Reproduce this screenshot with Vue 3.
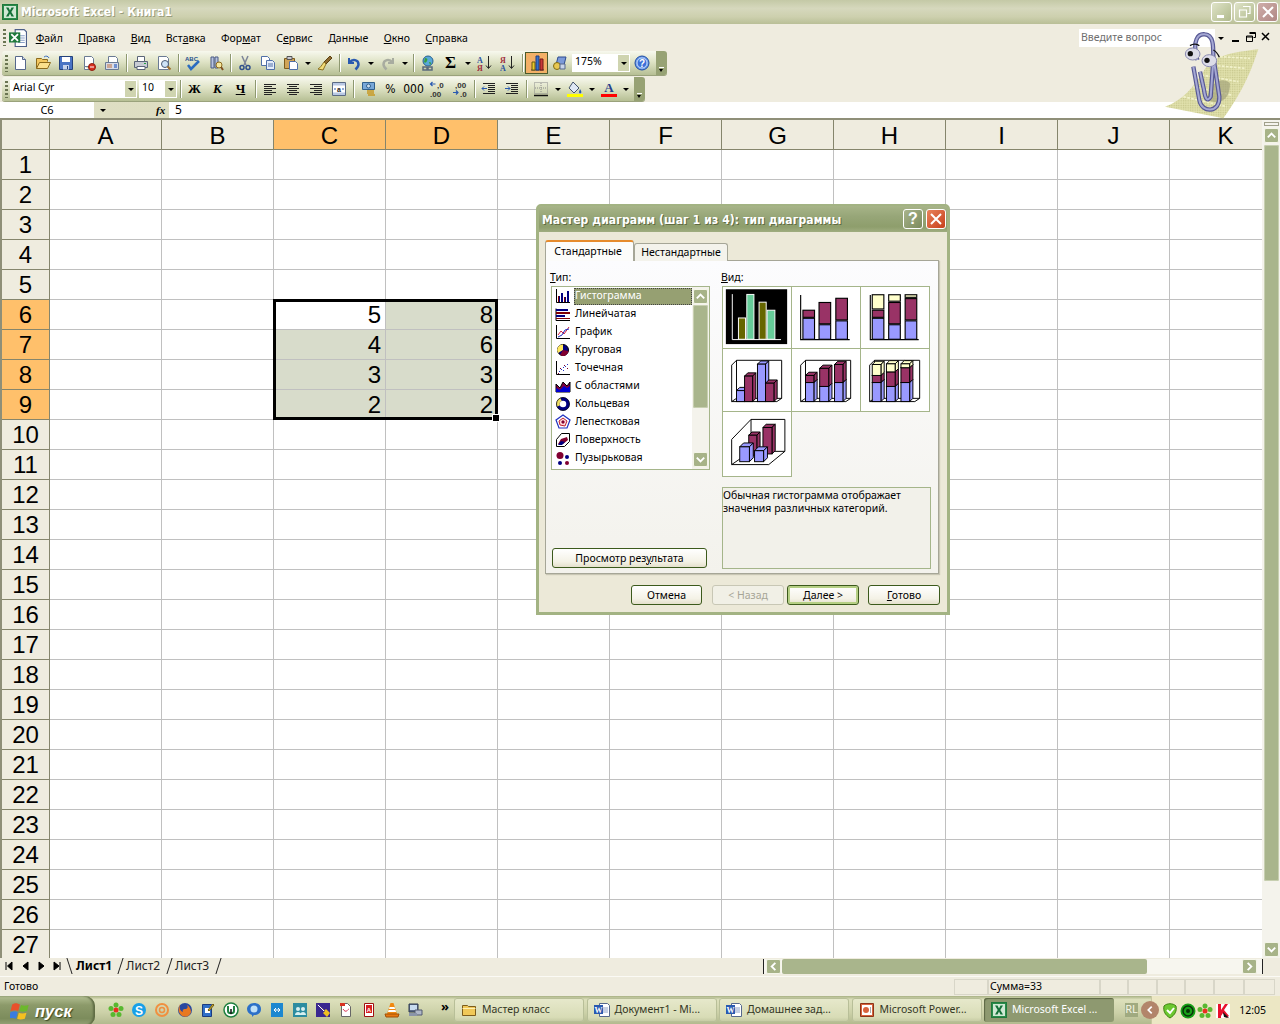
<script setup>
const cols = ['A','B','C','D','E','F','G','H','I','J','K']
const rows = Array.from({ length: 27 }, (_, i) => i + 1)
const values = { C6: 5, D6: 8, C7: 4, D7: 6, C8: 3, D8: 3, C9: 2, D9: 2 }
const isSel = (c, r) => (c === 'C' || c === 'D') && r >= 6 && r <= 9
const menu = [['','Ф','айл'],['','П','равка'],['','В','ид'],['Вст','а','вка'],['Фор','м','ат'],['С','е','рвис'],['','Д','анные'],['','О','кно'],['','С','правка']]

const I = {
  new: '<path d="M3.5 1.5h7l3 3v10h-10z" fill="#fff" stroke="#56688c"/><path d="M10.5 1.5v3h3" fill="#d5dcec" stroke="#56688c"/>',
  open: '<path d="M1.5 13.5v-10h5l1 1h5v2" fill="#f4c860" stroke="#8c6a1c"/><path d="M1.5 13.5l3-6h11l-3 6z" fill="#fbe08c" stroke="#8c6a1c"/><path d="M9 2c2-1.500 4-1 5 1" fill="none" stroke="#3a6cc0"/>',
  save: '<path d="M1.500 1.500h13v13h-13z" fill="#4a74c4" stroke="#24427c"/><path d="M4 2h8v5H4z" fill="#fff"/><path d="M5 10h6v4.500H5z" fill="#c8d4ec"/><path d="M9 11h1v3H9z" fill="#24427c"/>',
  perm: '<path d="M3.500 1.500h7l2 2v8h-9z M3.500 11.500v3h5" fill="#fff" stroke="#6a7a94"/><circle cx="11" cy="12" r="3.500" fill="#d83020" stroke="#902010"/><path d="M9 12h4" stroke="#fff"/>',
  mail: '<path d="M4.500 1.500h7l2 2v5h-9z" fill="#fff" stroke="#6a7a94"/><path d="M1.500 7.500h13v7h-13z" fill="#d8dce8" stroke="#6a7a94"/><path d="M3 10h5M3 12h5" stroke="#c07040"/><path d="M10 9h3v4h-3z" fill="#7090d0"/>',
  print: '<path d="M4.500 1.500h7v5h-7z" fill="#fff" stroke="#5a6478"/><path d="M1.500 6.500h13v6h-13z" fill="#c8ccd4" stroke="#5a6478"/><path d="M4 11.500h8v3H4z" fill="#fff" stroke="#5a6478"/><path d="M11 8h2v1h-2z" fill="#20a040"/>',
  prev: '<path d="M2.500 1.500h8l2 2v11h-10z" fill="#fff" stroke="#6a7a94"/><circle cx="9" cy="9" r="3.500" fill="#cfe4f8" stroke="#4a5a74"/><path d="M11.500 11.500l3 3" stroke="#a07030" stroke-width="2"/>',
  spell: '<text x="0" y="6" font-size="6" font-family="Liberation Sans" font-weight="700" fill="#26508c">ABC</text><path d="M3 10l3 4 8-8" fill="none" stroke="#2a6cc0" stroke-width="2.500"/>',
  res: '<path d="M3 2h3v11H3zM7 2h3v11H7z" fill="#b8c4e0" stroke="#4a5a84"/><circle cx="11" cy="10" r="3" fill="#f6e8a0" stroke="#8c6a1c"/><path d="M13 12l2 3" stroke="#805020" stroke-width="2"/>',
  cut: '<path d="M5 1l4 9M11 1l-4 9" stroke="#7c8498" stroke-width="1.500"/><circle cx="5" cy="12.500" r="2" fill="none" stroke="#30508c" stroke-width="1.500"/><circle cx="11" cy="12.500" r="2" fill="none" stroke="#30508c" stroke-width="1.500"/>',
  copy: '<path d="M1.500 1.500h6l2 2v7h-8z" fill="#fff" stroke="#5070a8"/><path d="M6.500 5.500h6l2 2v7h-8z" fill="#e4ecfa" stroke="#5070a8"/><path d="M8 9h5M8 11h5" stroke="#5070a8"/>',
  paste: '<path d="M1.500 3.500h10v10h-10z" fill="#d0a458" stroke="#7c5c1c"/><path d="M4 1.500h5v3H4z" fill="#c8c8d0" stroke="#555"/><path d="M6.500 6.500h6l2 2v6h-8z" fill="#fff" stroke="#5070a8"/>',
  brush: '<path d="M13 1l2 2-6 6-2-2z" fill="#8c6a30" stroke="#5c4010"/><path d="M7 7l2 2-3 6-5-1c2-1 4-4 6-7z" fill="#f2dc78" stroke="#8c7020"/>',
  undo: '<path d="M3 3v5h5" fill="none" stroke="#2a5ab0" stroke-width="2"/><path d="M3.500 7.500c3-4 9-3 9 2 0 2-1 3-3 5" fill="none" stroke="#2a5ab0" stroke-width="2.500"/>',
  redo: '<path d="M13 3v5H8" fill="none" stroke="#a8aca0" stroke-width="2"/><path d="M12.500 7.500c-3-4-9-3-9 2 0 2 1 3 3 5" fill="none" stroke="#a8aca0" stroke-width="2.500"/>',
  link: '<circle cx="8" cy="6" r="5" fill="#58a8d8" stroke="#2c6090"/><path d="M5 3c2 0 3 1 2 3s-2 2-3 1zM9 7c2 0 3 1 1 3z" fill="#38a040"/><path d="M3 12h4v3H3zM8 12h4v3H8z" fill="none" stroke="#5a6a7c" stroke-width="1.500"/>',
  az: '<text x="0" y="7.500" font-size="8" font-family="Liberation Serif" font-weight="700" fill="#2a50a0">А</text><text x="0" y="15.500" font-size="8" font-family="Liberation Serif" font-weight="700" fill="#a03040">Я</text><path d="M11.500 1v12M9 10.500l2.500 3 2.500-3" fill="none" stroke="#222"/>',
  za: '<text x="0" y="7.500" font-size="8" font-family="Liberation Serif" font-weight="700" fill="#a03040">Я</text><text x="0" y="15.500" font-size="8" font-family="Liberation Serif" font-weight="700" fill="#2a50a0">А</text><path d="M11.500 1v12M9 10.500l2.500 3 2.500-3" fill="none" stroke="#222"/>',
  chart: '<path d="M2 15h13" stroke="#333"/><path d="M3 7h3v8H3z" fill="#e8c828" stroke="#6a5a10"/><path d="M7 1h3v14H7z" fill="#3870c8" stroke="#1c3c80"/><path d="M11 4h3v11h-3z" fill="#c83838" stroke="#701818"/>',
  draw: '<path d="M6 2h8l-2 8H4z" fill="#7c9ad8" stroke="#2c4a90"/><circle cx="5" cy="11" r="3.500" fill="#e8c850" stroke="#806a10"/><path d="M8 9l5 0 0 5-5 0z" fill="#c8d4e8" stroke="#56688c"/>',
  help: '<circle cx="8" cy="8" r="7" fill="#6c9cec" stroke="#1c4aa0"/><circle cx="8" cy="8" r="5" fill="#3c70d8" stroke="#c8dcf8"/><text x="8" y="11.500" text-anchor="middle" font-size="10" font-family="Liberation Sans" font-weight="700" fill="#fff">?</text>',
  al: '<path d="M2 3.500h12M2 5.500h8M2 7.500h12M2 9.500h8M2 11.500h12M2 13.500h8" stroke="#222"/>',
  ac: '<path d="M2 3.500h12M4 5.500h8M2 7.500h12M4 9.500h8M2 11.500h12M4 13.500h8" stroke="#222"/>',
  ar: '<path d="M2 3.500h12M6 5.500h8M2 7.500h12M6 9.500h8M2 11.500h12M6 13.500h8" stroke="#222"/>',
  merge: '<path d="M1.500 1.500h13v13h-13z" fill="#fff" stroke="#5a6a84"/><path d="M2 2h12v2.500H2zM2 11.500h12V14H2z" fill="#b8c8e4"/><path d="M2 5h12v6H2z" fill="#fff"/><text x="8" y="10.500" text-anchor="middle" font-size="7" font-family="Liberation Sans" font-weight="700" fill="#222">a</text><path d="M3 8h2M11 8h2" stroke="#2a5ab0"/>',
  cur: '<path d="M2.500 1.500h12v7h-12z" fill="#78a8d8" stroke="#30608c"/><circle cx="8.500" cy="5" r="2" fill="#cfe0f0" stroke="#30608c"/><path d="M7 10h7M7 12h7M8 14h7" stroke="#c89820" stroke-width="1.500"/>',
  inc: '<path d="M6.500 3H1.500M3.500 1L1.500 3l2 2" fill="none" stroke="#2a5ab0" stroke-width="1.200"/><text x="8" y="7" font-size="8" font-family="Liberation Sans" font-weight="700" fill="#333">,0</text><text x="1" y="15.500" font-size="8" font-family="Liberation Sans" font-weight="700" fill="#333">,00</text>',
  dec: '<path d="M1 11.500h5M4 9.500l2 2-2 2" fill="none" stroke="#2a5ab0" stroke-width="1.200"/><text x="3" y="7" font-size="8" font-family="Liberation Sans" font-weight="700" fill="#333">,00</text><text x="8" y="15.500" font-size="8" font-family="Liberation Sans" font-weight="700" fill="#333">,0</text>',
  ind1: '<path d="M2 2.500h12M7 4.500h7M7 6.500h7M7 8.500h7M7 10.500h7M2 12.500h12" stroke="#222"/><path d="M6 7.500H1M3 5.500l-2 2 2 2" fill="none" stroke="#2a5ab0"/>',
  ind2: '<path d="M2 2.500h12M7 4.500h7M7 6.500h7M7 8.500h7M7 10.500h7M2 12.500h12" stroke="#222"/><path d="M1 7.500h5M4 5.500l2 2-2 2" fill="none" stroke="#2a5ab0"/>',
  bord: '<path d="M1.500 1.500h13v11h-13zM8 2v10M2 7h12" fill="none" stroke="#8a8a8a" stroke-dasharray="1 1"/><path d="M1 14.500h14" stroke="#111" stroke-width="1.500"/>',
  fill: '<path d="M6 1l6 6-5 5-5-5z" fill="#dfe8f4" stroke="#44546c"/><path d="M13 8c1 2 2 3 1 4s-2 0-2-1z" fill="#2a5ab0"/><path d="M0 13h16v3H0z" fill="#ffff00"/>',
  fcol: '<text x="8" y="11" text-anchor="middle" font-size="13" font-family="Liberation Serif" font-weight="700" fill="#26408c">A</text><path d="M0 13h16v3H0z" fill="#ff0000"/>',
  xlsT: '<rect x=".5" y=".5" width="15" height="15" fill="#fff" stroke="#1f7a3c"/><rect x="1.500" y="1.500" width="13" height="13" fill="#cfe8d4" stroke="#2a8a4a"/><path d="M4 3.500h2.500L8 6.500l1.500-3H12L9.300 8l2.700 4.500H9.500L8 9.500l-1.500 3H4L6.700 8z" fill="#137038"/>',
  xlsDoc: '<path d="M5.500 .5h8l2 2v13h-10z" fill="#fff" stroke="#4c5e88"/><path d="M8 6h6M8 8h6M8 10h6M8 12h6" stroke="#8ca0c8"/><path d="M0 3h10v9H0z" fill="#1f7a3c"/><path d="M2 4.500l6 6M8 4.500l-6 6" stroke="#fff" stroke-width="1.600"/>',
  word: '<path d="M5.500 1.500h8l2 2v11h-10z" fill="#fff" stroke="#56688c"/><path d="M7 6h7M7 8h7M7 10h7" stroke="#8ca0c8"/><path d="M0 3h9v9H0z" fill="#2a5ab0"/><text x="4.500" y="10.500" text-anchor="middle" font-size="8" font-family="Liberation Serif" font-weight="700" fill="#fff">W</text>',
  ppt: '<path d="M1.500 1.500h13v13h-13z" fill="#d8633c" stroke="#8c3418"/><path d="M3 3h10v10H3z" fill="#fff"/><circle cx="7" cy="8" r="3" fill="#d8633c"/><path d="M11 6h1M11 8h1M11 10h1" stroke="#555"/>',
  folder: '<path d="M1.500 13.500v-10h5l1 1h7v9z" fill="#f0c858" stroke="#7c5c1c"/><path d="M1.500 6.500h13" stroke="#fff0b0"/>',
  icq: '<g fill="#58b830"><circle cx="8" cy="3" r="2.500"/><circle cx="13" cy="6.500" r="2.500"/><circle cx="11" cy="12.500" r="2.500"/><circle cx="5" cy="12.500" r="2.500"/><circle cx="3" cy="6.500" r="2.500"/></g><circle cx="8" cy="8" r="2.500" fill="#e83020"/>',
  skype: '<circle cx="8" cy="8" r="7" fill="#18a0e8"/><text x="8" y="12.500" text-anchor="middle" font-size="12" font-family="Liberation Sans" font-weight="700" fill="#fff">S</text>',
  at: '<circle cx="8" cy="8" r="6" fill="none" stroke="#f09040" stroke-width="2"/><circle cx="8" cy="8" r="2.500" fill="none" stroke="#f09040" stroke-width="1.500"/>',
  ff: '<circle cx="8" cy="8" r="7" fill="#2848a0"/><path d="M3 2c-2 4-2 8 1 11s9 2 10-3c0-3-2-6-4-7 1 2 1 3-1 4-2 0-4 0-3 3-3-1-4-4-3-8z" fill="#e87820"/>',
  ie: '<path d="M2.500 2.500h9v12h-9z" fill="#3070c8" stroke="#1c3c80"/><path d="M5 6h5v5H5z" fill="#fff"/><path d="M8 8l5-6 1 1-5 6z" fill="#e8c030" stroke="#705a10"/>',
  ut: '<circle cx="8" cy="8" r="7" fill="#fff" stroke="#208040" stroke-width="1.500"/><path d="M5 4v5c0 3 6 3 6 0V4" fill="none" stroke="#208040" stroke-width="2"/><path d="M8 12V7" stroke="#111" stroke-width="1.500"/>',
  qt: '<path d="M8 1c4 0 7 2 7 6s-3 6-7 6L6 15v-2C3 12 1 10 1 7s3-6 7-6z" fill="#2c70c8"/><circle cx="8" cy="7" r="3.500" fill="#bfe0f8"/>',
  tv: '<path d="M2 1h12v14H2z" fill="#1c88d0"/><path d="M5 8h6M7 6L5 8l2 2M9 6l2 2-2 2" fill="none" stroke="#fff"/>',
  lan: '<path d="M1 1h14v14H1z" fill="#2c8ca0"/><circle cx="6" cy="7" r="2" fill="#d8f0f0"/><circle cx="11" cy="7" r="2" fill="#d8f0f0"/><path d="M3 13c0-4 6-4 6 0M8 13c0-4 6-4 6 0" fill="#d8f0f0"/>',
  clip2: '<path d="M1 1h14v14H1z" fill="#3a2890"/><path d="M1 1l8 8 2-2 4 4-3 4-4-4 2-2z" fill="#f0c020"/><path d="M3 3l6 6" stroke="#fff"/>',
  pdfp: '<path d="M3.500 1.500h6l3 3v10h-9z" fill="#fff" stroke="#666"/><path d="M5 7c3 5 5 0 6 0" fill="none" stroke="#d83050"/><path d="M2 1h5v3H2z" fill="#d83020"/>',
  adobe: '<path d="M3.500 1.500h9v13h-9z" fill="#fff" stroke="#a01010"/><path d="M5 3h6v8H5z" fill="#d82020"/><text x="8" y="9.500" text-anchor="middle" font-size="6" font-family="Liberation Sans" font-weight="700" fill="#fff">A</text>',
  vlc: '<path d="M6.500 1h3l3.500 11H3z" fill="#f08810"/><path d="M5.500 5h5l.6 2H5z M4.500 8h7l.6 2H4z" fill="#fff"/><path d="M1 12h14l-1 3H2z" fill="#e87810" stroke="#a05008"/>',
  pc: '<path d="M2 2h9v8H2z" fill="#5c6c88" stroke="#2c3850"/><path d="M3 3h7v5H3z" fill="#c8dcf0"/><path d="M8 8h7v5H8z" fill="#b0b8c8" stroke="#505870"/><path d="M2 11h8v3H2z" fill="#8a94a8"/>',
  shield: '<path d="M2 3c3-3 9-3 12 0 1 5-1 9-6 12C3 12 1 8 2 3z" fill="#6cc830" stroke="#3c8010"/><path d="M5 7l3 3 4-5" fill="none" stroke="#fff" stroke-width="2"/>',
  green: '<circle cx="8" cy="8" r="7.500" fill="#18a018"/><circle cx="8" cy="8" r="5" fill="none" stroke="#0a300a" stroke-width="1.500"/><circle cx="8" cy="8" r="2" fill="#0a300a"/>',
  kasper: '<path d="M1 1h14v14H1z" fill="#fff"/><path d="M3 1h3v6l4-6h3L9 7l5 6-3 2-3-5-2 3v2H3z" fill="#e8102c"/><path d="M8 9l6 6-5-1z" fill="#111"/>',
}

const tb1 = 'new open save perm mail | print prev | spell res | cut copy paste v brush | undo v redo v | link sigma v az za | chart draw'.split(' ')
const tb2 = 'b i u | al ac ar merge | cur pct th inc dec | ind1 ind2 | bord v fill v fcol v'.split(' ')
const TXT = { sigma: 'Σ', b: 'Ж', i: 'К', u: 'Ч', pct: '%', th: '000' }
const quick = ['icq','skype','at','ff','ie','ut','qt','tv','lan','clip2','pdfp','adobe','vlc','pc']
const tasks = [
  { icon: 'folder', text: 'Мастер класс' },
  { icon: 'word', text: 'Документ1 - Mi...' },
  { icon: 'word', text: 'Домашнее зад...' },
  { icon: 'ppt', text: 'Microsoft Power...' },
  { icon: 'xlsT', text: 'Microsoft Excel ...', active: true },
]
const tray = ['shield','green','icq','kasper']

const types = [
  { n: 'Гистограмма', s: '<path d="M1.500 1v13.500H15" fill="none" stroke="#000"/><path d="M3 8h2v6H3zM6 5h2v9H6zM9 9h2v5H9zM12 3h2v11h-2z" fill="#000080"/><path d="M3 8h1v6H3zM9 9h1v5H9z" fill="#800000"/>' },
  { n: 'Линейчатая', s: '<path d="M1 2.500v12h14" fill="none" stroke="#000"/><path d="M1 3h12v2H1zM1 9h9v2H1z" fill="#000080"/><path d="M1 6h14v2H1zM1 12h14v1H1z" fill="#800000"/>' },
  { n: 'График', s: '<path d="M1.500 1v13.500H15" fill="none" stroke="#000"/><path d="M3 11l3-4 3 3 5-7" fill="none" stroke="#d02040"/><path d="M3 13l4-2 3-5 4-1" fill="none" stroke="#2030c0"/>' },
  { n: 'Круговая', s: '<circle cx="8" cy="8" r="5.500" fill="#000080" stroke="#000"/><path d="M8 8V2.500A5.500 5.500 0 0 0 3 11z" fill="#ffe860"/><path d="M8 8l5.500 1A5.500 5.500 0 0 1 5 13z" fill="#800030"/>' },
  { n: 'Точечная', s: '<path d="M1.500 1v13.500H15" fill="none" stroke="#000"/><path d="M4 11h1v1H4zM6 9h1v1H6zM8 10h1v1H8zM10 6h1v1h-1zM12 4h1v1h-1zM8 7h1v1H8z" fill="#2030c0"/><path d="M5 8h1v1H5zM9 5h1v1H9zM12 8h1v1h-1zM3 13h1v1H3z" fill="#800030"/>' },
  { n: 'С областями', s: '<path d="M1 14V6l4 4 3-6 4 4 3-4v10z" fill="#800040" stroke="#000"/><path d="M1 14v-4l4 2 4-4 3 2 3-2v6z" fill="#0000d0"/>' },
  { n: 'Кольцевая', s: '<circle cx="8" cy="8" r="5" fill="none" stroke="#000080" stroke-width="3.500"/><path d="M3.500 10A5 5 0 0 1 6 3.400" fill="none" stroke="#f0e060" stroke-width="3.500"/><circle cx="8" cy="8" r="6.500" fill="none" stroke="#000" stroke-width=".7"/>' },
  { n: 'Лепестковая', s: '<path d="M8 1l7 5-3 8H4L1 6z" fill="#fff" stroke="#2030c0" stroke-width="1.200"/><path d="M8 4l4 3-2 5-5-1-1-4z" fill="#ffd8d8" stroke="#c02030"/><path d="M8 6l2 2-2 2-2-2z" fill="#800030"/>' },
  { n: 'Поверхность', s: '<path d="M1.500 14.500v-7l5-6h8v8l-5 5z" fill="#fff" stroke="#000"/><path d="M3 12l3-5 6-2 1 3-5 4z" fill="#800030"/><path d="M3 13l3-4 4 1-3 3z" fill="#000080"/>' },
  { n: 'Пузырьковая', s: '<circle cx="5" cy="5.500" r="3.500" fill="#800030"/><circle cx="12" cy="7" r="2" fill="#000080"/><circle cx="5" cy="13" r="2" fill="#000080"/><circle cx="12" cy="13" r="2" fill="#800030"/>' },
]

const P = '#993366', B = '#9999ff', Y = '#ffffcc'
const rc = (x1, y1, x2, y2, f) => `<rect x="${x1}" y="${y1}" width="${x2 - x1}" height="${y2 - y1}" fill="${f}" stroke="#000" stroke-width="3.500"/>`
const stack = (ax, end, bars) => `<path d="M${ax} 25V163H${end}" fill="none" stroke="#000" stroke-width="3.500"/>` + bars.map(b => b.parts.map(p => rc(b.x, p[0], b.x + 36, p[1], p[2])).join('')).join('')
const box = (x, y, w, h, f, d = 10) => `<path d="M${x} ${y}l${d} ${-d}h${w}l${-d} ${d}z" fill="${f}" stroke="#000" stroke-width="3"/><path d="M${x + w} ${y}l${d} ${-d}v${h}l${-d} ${d}z" fill="${f}" stroke="#000" stroke-width="3"/><rect x="${x}" y="${y}" width="${w}" height="${h}" fill="${f}" stroke="#000" stroke-width="3"/>`
const frame = '<path d="M40 35H180V153H40zM40 35L25 50V163H165L180 153M25 163L40 153" fill="none" stroke="#000" stroke-width="3"/>'
const charts = [
  { s: `<rect x="7" y="7" width="190" height="170" fill="#000"/><path d="M27 22V163H178" fill="none" stroke="#fff" stroke-width="3"/>` +
    '<rect x="46" y="96" width="22" height="66" fill="#666600" stroke="#fff" stroke-width="3"/><rect x="72" y="23" width="22" height="139" fill="#66cc99" stroke="#fff" stroke-width="3"/><rect x="110" y="47" width="22" height="115" fill="#666600" stroke="#fff" stroke-width="3"/><rect x="135" y="72" width="24" height="90" fill="#66cc99" stroke="#fff" stroke-width="3"/>' },
  { s: stack(25, 177, [{ x: 32, parts: [[72, 94, P], [97, 162, B]] }, { x: 82, parts: [[48, 114, P], [117, 162, B]] }, { x: 134, parts: [[35, 102, P], [105, 162, B]] }]) },
  { s: stack(27, 177, [{ x: 33, parts: [[24, 68, Y], [72, 94, P], [97, 162, B]] }, { x: 84, parts: [[24, 44, Y], [48, 114, P], [117, 162, B]] }, { x: 135, parts: [[24, 32, Y], [36, 102, P], [105, 162, B]] }]) },
  { s: frame + box(40, 129, 25, 34, B) + box(65, 84, 25, 79, P) + box(105, 47, 25, 116, B) + box(130, 106, 26, 57, P) },
  { s: frame + box(40, 104, 26, 59, B) + box(40, 82, 26, 22, P) + box(84, 116, 28, 47, B) + box(84, 60, 28, 56, P) + box(130, 104, 26, 59, B) + box(130, 48, 26, 56, P) },
  { s: frame + box(33, 104, 27, 59, B) + box(33, 82, 27, 22, P) + box(33, 48, 27, 34, Y) + box(77, 116, 27, 47, B) + box(77, 71, 27, 45, P) + box(77, 46, 27, 25, Y) + box(122, 104, 27, 59, B) + box(122, 58, 27, 46, P) + box(122, 46, 27, 12, Y) },
  { s: '<path d="M85 23H190V122L140 163H25V85zM25 163L85 122H190M85 23V122" fill="none" stroke="#000" stroke-width="3"/>' + box(122, 48, 28, 82, P) + box(78, 72, 25, 62, P) + box(50, 108, 30, 46, B, 12) + box(96, 120, 28, 34, B, 12) },
]
</script>

<template>
  <div class="xp">
    <header class="titlebar">
      <svg class="ic" viewBox="0 0 16 16" v-html="I.xlsT"></svg>
      <span class="title-text">Microsoft Excel - Книга1</span>
      <div class="winbtns">
        <button class="wb"><span class="w-min"></span></button>
        <button class="wb"><svg viewBox="0 0 14 14"><path d="M5 1.500h7v7H9.500M1.500 5h7v7h-7z" fill="none" stroke="#fff" stroke-width="1.200"/></svg></button>
        <button class="wb close"><svg viewBox="0 0 14 14"><path d="M2 2l10 10M12 2L2 12" stroke="#fff" stroke-width="2"/></svg></button>
      </div>
    </header>

    <nav class="menubar">
      <i class="grip"></i>
      <svg class="doc" viewBox="0 0 16 16" v-html="I.xlsDoc"></svg>
      <span v-for="(m, i) in menu" :key="i" class="mi">{{ m[0] }}<u>{{ m[1] }}</u>{{ m[2] }}</span>
      <div class="ask"><span class="ask-field">Введите вопрос</span><b class="ask-drop"></b></div>
      <div class="docctl">
        <svg viewBox="0 0 14 14"><path d="M3 10h7v2H3z" fill="#000"/></svg>
        <svg viewBox="0 0 14 14"><path d="M5.500 2.500h6v5h-2M2.500 6h6v5.500h-6zM2.500 7h6M5.500 3.500h6" fill="none" stroke="#000"/></svg>
        <svg viewBox="0 0 14 14"><path d="M3 3l7 7M10 3l-7 7" stroke="#000" stroke-width="1.500"/></svg>
      </div>
    </nav>

    <div class="toolrow">
      <div class="tb tb1">
        <i class="grip"></i>
        <template v-for="(t, i) in tb1" :key="i">
          <i v-if="t === '|'" class="sep"></i>
          <i v-else-if="t === 'v'" class="drop"></i>
          <span v-else class="tbtn" :class="{ on: t === 'chart' }">
            <b v-if="TXT[t]" class="glyph" :class="'g-' + t">{{ TXT[t] }}</b>
            <svg v-else class="ic" viewBox="0 0 16 16" v-html="I[t]"></svg>
          </span>
        </template>
        <span class="combo zoom"><span class="combo-text">175%</span><i class="combo-drop"></i></span>
        <span class="tbtn"><svg class="ic" viewBox="0 0 16 16" v-html="I.help"></svg></span>
        <span class="tb-end"><i></i></span>
      </div>
    </div>
    <div class="toolrow second">
      <div class="tb tb2">
        <i class="grip"></i>
        <span class="combo font"><span class="combo-text">Arial Cyr</span><i class="combo-drop"></i></span>
        <span class="combo size"><span class="combo-text">10</span><i class="combo-drop"></i></span>
        <i class="sep"></i>
        <template v-for="(t, i) in tb2" :key="i">
          <i v-if="t === '|'" class="sep"></i>
          <i v-else-if="t === 'v'" class="drop"></i>
          <span v-else class="tbtn">
            <b v-if="TXT[t]" class="glyph" :class="'g-' + t">{{ TXT[t] }}</b>
            <svg v-else class="ic" viewBox="0 0 16 16" v-html="I[t]"></svg>
          </span>
        </template>
        <span class="tb-end"><i></i></span>
      </div>
    </div>

    <div class="formula">
      <span class="namebox">C6</span>
      <i class="name-drop"></i>
      <em class="fx">fx</em>
      <span class="fval">5</span>
    </div>
    <div class="formula-rule"></div>

    <main class="sheet">
      <div class="grid">
        <div class="corner"></div>
        <div v-for="c in cols" :key="c" class="ch" :class="{ hot: c === 'C' || c === 'D' }">{{ c }}</div>
        <template v-for="r in rows" :key="r">
          <div class="rh" :class="{ hot: r >= 6 && r <= 9 }">{{ r }}</div>
          <div v-for="c in cols" :key="c" class="cell" :class="{ sel: isSel(c, r) && c + r !== 'C6' }">{{ values[c + r] }}</div>
        </template>
      </div>
      <div class="selbox"><i class="handle"></i></div>
      <aside class="vscroll">
        <i class="vs-cap"></i>
        <span class="sb-btn"><svg viewBox="0 0 14 14"><path d="M3 9l4-4 4 4" fill="none" stroke="#fff" stroke-width="2"/></svg></span>
        <i class="vs-thumb"></i>
        <span class="sb-btn end"><svg viewBox="0 0 14 14"><path d="M3 5l4 4 4-4" fill="none" stroke="#fff" stroke-width="2"/></svg></span>
      </aside>
    </main>

    <div class="sheetfoot">
      <div class="tabnav">
        <svg viewBox="0 0 60 14"><path d="M3 3v8M9 3L4.500 7 9 11zM25 3l-5 4 5 4zM36 3l5 4-5 4zM57 3v8M51 3l5 4-5 4z" stroke="#000" fill="#000"/></svg>
      </div>
      <div class="sheettabs">
        <span class="stab active">Лист1</span><span class="stab">Лист2</span><span class="stab">Лист3</span>
      </div>
      <div class="hscroll">
        <span class="sb-btn"><svg viewBox="0 0 14 14"><path d="M9 3L5 7l4 4" fill="none" stroke="#fff" stroke-width="2"/></svg></span>
        <i class="hs-thumb"></i>
        <span class="sb-btn end"><svg viewBox="0 0 14 14"><path d="M5 3l4 4-4 4" fill="none" stroke="#fff" stroke-width="2"/></svg></span>
      </div>
    </div>

    <div class="status">
      <span class="st-ready">Готово</span>
      <span class="st-p w34"></span><span class="st-p w112">Сумма=33</span><span class="st-p w28"></span><span class="st-p w29"></span><span class="st-p w28"></span><span class="st-p w29"></span><span class="st-p w30"></span><span class="st-p w31"></span>
    </div>

    <footer class="taskbar">
      <button class="start">
        <svg viewBox="0 0 20 18"><path d="M2 3c3-2 5-1 7 0L7.500 9c-2-1-4-1-7 0z" fill="#e8512c"/><path d="M10 3.500c2 1 4 1 7 0L15.500 9c-3 1-5 1-7 0z" fill="#6cb82c"/><path d="M.5 10c3-1 5-1 6.500 0L5.500 16c-2-1-4-1-6.500 0z" fill="#3a7ce0"/><path d="M8 10.500c2 1 4 1 7 0L13.500 16c-3 1-5 1-7 0z" fill="#f4c020"/></svg>
        <span>пуск</span>
      </button>
      <div class="quick">
        <svg v-for="q in quick" :key="q" class="ic" viewBox="0 0 16 16" v-html="I[q]"></svg>
        <span class="more">»</span>
      </div>
      <div class="tasks">
        <div v-for="t in tasks" :key="t.text" class="task" :class="{ active: t.active }">
          <svg class="ic" viewBox="0 0 16 16" v-html="I[t.icon]"></svg>
          <span>{{ t.text }}</span>
        </div>
      </div>
      <span class="lang">RL</span>
      <span class="tray-arrow"><svg viewBox="0 0 14 14"><path d="M9 3L5 7l4 4" fill="none" stroke="#fff" stroke-width="2"/></svg></span>
      <div class="tray">
        <svg v-for="t in tray" :key="t" class="ic" viewBox="0 0 16 16" v-html="I[t]"></svg>
        <span class="clock">12:05</span>
      </div>
    </footer>

    <svg class="clippy" viewBox="0 0 690 450">
      <defs><pattern id="paperdots" width="7" height="7" patternUnits="userSpaceOnUse"><rect width="7" height="7" fill="#dcdca4"/><rect width="3" height="3" fill="#c4c48c"/><rect x="4" y="4" width="2" height="2" fill="#f0f0cc"/></pattern></defs>
      <path d="M345 320C400 300 430 260 460 215 480 180 510 160 625 148 610 190 590 260 520 355z" fill="url(#paperdots)"/>
      <path d="M400 290L530 320M430 260L545 285M455 225L565 245M480 195L585 205M510 170L600 175" stroke="#f2f2cc" stroke-width="5" stroke-dasharray="8 4"/>
      <path d="M470 300C520 320 540 290 540 250 520 230 480 240 470 300z" fill="#a0a078" opacity=".65"/>
      <path d="M442 180C425 120 445 100 465 103 490 106 490 135 490 170L508 290C510 340 455 340 448 300L430 200M490 180L482 290C470 310 465 290 462 270L450 215" fill="none" stroke="#585994" stroke-width="13"/>
      <path d="M442 180C425 120 445 100 465 103 490 106 490 135 490 170L508 290C510 340 455 340 448 300L430 200M490 180L482 290C470 310 465 290 462 270L450 215" fill="none" stroke="#a5a8d4" stroke-width="6"/>
      <ellipse cx="428" cy="162" rx="22" ry="18" fill="#dcdce8" stroke="#8a8ab0" stroke-width="3"/><circle cx="421" cy="161" r="8" fill="#111"/>
      <ellipse cx="478" cy="182" rx="22" ry="18" fill="#dcdce8" stroke="#8a8ab0" stroke-width="3"/><circle cx="471" cy="181" r="8" fill="#111"/>
      <path d="M420 137C430 130 442 132 448 137M490 150C500 155 505 165 508 172" fill="none" stroke="#111" stroke-width="4"/>
    </svg>

    <section class="dialog">
      <div class="dlg-title">
        <span class="dlg-title-text">Мастер диаграмм (шаг 1 из 4): тип диаграммы</span>
        <span class="dlg-q">?</span>
        <span class="dlg-x"><svg viewBox="0 0 14 14"><path d="M2 2l10 10M12 2L2 12" stroke="#fff" stroke-width="2"/></svg></span>
      </div>
      <div class="dlg-body">
        <div class="dtabs">
          <span class="dtab active">Стандартные</span>
          <span class="dtab">Нестандартные</span>
        </div>
        <div class="panel">
          <div class="p-left">
            <label class="lbl"><u>Т</u>ип:</label>
            <div class="list">
              <div class="items">
                <div v-for="(t, i) in types" :key="t.n" class="item" :class="{ cur: i === 0 }">
                  <svg class="ic" viewBox="0 0 16 16" v-html="t.s"></svg>
                  <span>{{ t.n }}</span>
                </div>
              </div>
              <div class="ls">
                <span class="sb-btn"><svg viewBox="0 0 14 14"><path d="M3 9l4-4 4 4" fill="none" stroke="#fff" stroke-width="2"/></svg></span>
                <i class="ls-thumb"></i>
                <span class="sb-btn end"><svg viewBox="0 0 14 14"><path d="M3 5l4 4 4-4" fill="none" stroke="#fff" stroke-width="2"/></svg></span>
              </div>
            </div>
            <button class="xbtn preview">Просмотр рез<u>у</u>льтата</button>
          </div>
          <div class="p-right">
            <label class="lbl"><u>В</u>ид:</label>
            <div class="thumbs">
              <div v-for="(c, i) in charts" :key="i" class="thumb">
                <svg viewBox="0 0 204 186" v-html="c.s"></svg>
              </div>
            </div>
            <p class="desc">Обычная гистограмма отображает значения различных категорий.</p>
          </div>
        </div>
        <div class="dlg-foot">
          <button class="xbtn">Отмена</button>
          <button class="xbtn off">&lt; Назад</button>
          <button class="xbtn def"><u>Д</u>алее &gt;</button>
          <button class="xbtn"><u>Г</u>отово</button>
        </div>
      </div>
    </section>
  </div>
</template>

<style scoped>
.xp { position: relative; width: 1280px; height: 1024px; overflow: hidden; display: flex; flex-direction: column; background: #efecdf; font: 10.5px "Noto Sans", "Liberation Sans", sans-serif; color: #000; }
.ic { width: 16px; height: 16px; flex: none; display: block; }
i, em { display: block; }

.titlebar { height: 24px; flex: none; display: flex; align-items: center; padding-left: 2px; gap: 3px; background: linear-gradient(#c4c9a6, #d6d8bd 35%, #cdd0ae 70%, #b9bf97); }
.title-text { color: #fff; font: 700 12px "DejaVu Sans Condensed", "Liberation Sans", sans-serif; letter-spacing: .08px; text-shadow: 1px 1px 0 #9a9c7c; }
.winbtns { margin-left: auto; display: flex; gap: 2px; padding-right: 2px; }
.wb { width: 21px; height: 20px; padding: 2px; border: 1px solid #fff; border-radius: 3px; background: linear-gradient(135deg, #dfe3c8, #b0ba8c); display: flex; align-items: center; justify-content: center; }
.wb svg { width: 14px; height: 14px; }
.w-min { width: 7px; height: 3px; background: #fff; margin-top: 8px; margin-right: 2px; }
.close { background: linear-gradient(135deg, #cfaeaa, #b08884); }

.menubar { position: relative; height: 27px; flex: none; display: flex; align-items: center; padding-left: 3px; background: #efecdf; }
.grip { width: 3px; height: 17px; flex: none; background: repeating-linear-gradient(#6b7552 0 2px, transparent 2px 4px); }
.doc { width: 18px; height: 18px; flex: none; margin: 0 1px 0 3px; }
.mi { padding: 0 7.7px; white-space: nowrap; font-size: 10.5px; }
.ask { position: absolute; left: 1079px; top: 5px; display: flex; }
.ask-field { width: 136px; height: 18px; background: #fff; color: #6e6e6e; line-height: 16px; padding-left: 2px; box-sizing: border-box; }
.ask-drop { width: 12px; height: 18px; position: relative; }
.ask-drop::after, .combo-drop::after, .drop::after, .name-drop::after { content: ""; position: absolute; left: 50%; top: 50%; margin: -1px 0 0 -3px; border: 3px solid transparent; border-top: 3px solid #000; border-bottom: 0; }
.docctl { position: absolute; left: 1229px; top: 6px; display: flex; gap: 1px; }
.docctl svg { width: 14px; height: 14px; }

.toolrow { height: 26px; flex: none; padding-left: 2px; box-sizing: border-box; }
.tb { height: 24px; display: inline-flex; align-items: center; padding-left: 3px; box-sizing: border-box; border-radius: 3px; background: linear-gradient(#f7f8ee, #dfe3c6 45%, #b6bf94); box-shadow: 0 1px 0 #9aa27c; }
.tbtn { width: 23px; height: 22px; flex: none; display: flex; align-items: center; justify-content: center; box-sizing: border-box; }
.tbtn.on { background: #f3b067; border: 1px solid #4b5a2c; }
.sep { width: 1px; height: 18px; margin: 0 2px 0 3px; background: #8e9870; box-shadow: 1px 0 0 #fff; flex: none; }
.drop { width: 11px; height: 20px; position: relative; flex: none; }
.glyph { font: 700 13px "Liberation Serif", serif; }
.g-sigma { font: 700 17px "Liberation Serif", serif; }
.g-i { font-style: italic; }
.g-u { text-decoration: underline; }
.g-pct, .g-th { font: 400 12px "DejaVu Sans Condensed", "Liberation Sans", sans-serif; }
.combo { height: 18px; background: #fff; display: flex; flex: none; align-items: center; box-sizing: border-box; padding-left: 2px; border: 1px solid #fff; }
.combo-text { flex: 1; font-size: 10.5px; line-height: 13px; margin-top: -3px; }
.combo-drop { width: 11px; height: 16px; position: relative; background: #cfd4b0; }
.zoom { width: 58px; margin-left: 1px; }
.font { width: 127px; margin-left: 2px; }
.size { width: 38px; margin-left: 2px; }
.tb-end { width: 11px; height: 24px; background: #97a274; border-radius: 0 3px 3px 0; position: relative; flex: none; margin-left: auto; }
.tb-end i { position: absolute; left: 3px; bottom: 7px; width: 5px; height: 1px; background: #fff; }
.tb-end i::after { content: ""; position: absolute; left: 0; top: 2px; border: 2.500px solid transparent; border-top: 3px solid #000; border-bottom: 0; }
.tb1 { width: 665px; }
.tb2 { width: 643px; }

.formula { height: 16px; flex: none; margin-top: -1px; display: flex; align-items: center; background: linear-gradient(90deg, #dfdfc4, #d8d8b8); }
.namebox { width: 94px; height: 16px; line-height: 15px; text-align: center; background: #fff; font-size: 11px; }
.name-drop { width: 18px; height: 16px; position: relative; }
.fx { margin-left: 44px; width: 13px; font: italic 700 11px "Liberation Serif", serif; }
.fval { flex: 1; background: #fff; height: 16px; line-height: 15px; padding-left: 6px; font-size: 12px; }
.formula-rule { height: 2px; flex: none; background: #8f8f78; }

.sheet { position: relative; height: 838px; flex: none; overflow: hidden; display: flex; background: #fff; }
.grid { flex: none; width: 1262px; overflow: hidden; padding-left: 2px; box-sizing: border-box; display: grid; grid-template-columns: 48px repeat(11, 112px); grid-auto-rows: 30px; box-shadow: inset 2px 0 0 #8f8f78; }
.corner, .ch, .rh { background: #efecdf; border-right: 1px solid #85856c; border-bottom: 1px solid #85856c; box-sizing: border-box; font: 24px/29px "Liberation Sans", sans-serif; text-align: center; }
.ch { line-height: 31px; }
.hot { background: #ffc06b; }
.cell { border-right: 1px solid #c0c0c0; border-bottom: 1px solid #c0c0c0; box-sizing: border-box; font: 24px/29px "Liberation Sans", sans-serif; text-align: right; padding-right: 4px; }
.cell.sel { background: #d8dccb; }
.selbox { position: absolute; left: 273px; top: 179px; width: 225px; height: 121px; box-sizing: border-box; border: 3px solid #000; pointer-events: none; }
.handle { position: absolute; right: -5px; bottom: -5px; width: 6px; height: 6px; background: #000; border: 1px solid #fff; }
.vscroll { flex: 1; display: flex; flex-direction: column; align-items: center; background: #f4f3ec; padding-top: 2px; }
.vs-cap { width: 15px; height: 4px; border: 1px solid #a0a08a; box-sizing: border-box; margin-bottom: 2px; }
.sb-btn { width: 15px; height: 15px; flex: none; background: #a7b388; border: 1px solid #f4f5e8; box-sizing: border-box; border-radius: 2px; display: flex; align-items: center; justify-content: center; }
.sb-btn svg { width: 13px; height: 13px; }
.vscroll .end { margin-top: auto; margin-bottom: 1px; }
.vs-thumb { width: 15px; height: 736px; margin-top: 2px; background: #a9b58c; border-radius: 2px; box-shadow: inset 0 0 0 1px #c7cfb0; }

.sheetfoot { height: 16px; flex: none; display: flex; align-items: center; background: #efecdf; }
.tabnav { width: 66px; flex: none; }
.tabnav svg { width: 60px; height: 14px; margin-left: 3px; display: block; }
.sheettabs { display: flex; width: 695px; flex: none; align-items: center; font: 12px/16px "Noto Sans", sans-serif; }
.stab { position: relative; width: 49px; padding-left: 10px; box-sizing: border-box; color: #222; }
.stab:first-child { width: 50px; }
.stab::after { content: ""; position: absolute; right: -5px; top: 0; height: 16px; border-right: 1px solid #222; transform: skewX(-18deg); }
.stab.active { font-weight: 700; color: #000; }
.stab.active::before { content: ""; position: absolute; left: 3px; top: 0; height: 16px; border-left: 1px solid #222; transform: skewX(18deg); }
.hscroll { width: 499px; flex: none; margin-left: 2px; height: 15px; display: flex; border-left: 1px solid #222; box-shadow: 1px 0 0 #222; background: #f7f6ef; padding-left: 2px; box-sizing: border-box; }
.hs-thumb { width: 365px; margin-left: 1px; background: #a9b58c; border-radius: 2px; }
.hscroll .end { margin-left: auto; margin-right: 5px; }

.status { height: 20px; flex: none; margin-top: 2px; display: flex; align-items: center; padding-right: 5px; background: #efecdf; border-top: 1px solid #fbfaf5; box-sizing: border-box; }
.st-ready { margin-right: auto; padding-left: 4px; margin-top: -2px; }
.st-p { height: 16px; border: 1px solid #d8d6c8; box-sizing: border-box; line-height: 13px; white-space: nowrap; padding-left: 1px; }
.w34 { width: 34px; } .w112 { width: 112px; } .w28 { width: 28px; } .w29 { width: 29px; } .w30 { width: 30px; } .w31 { width: 31px; }

.taskbar { height: 30px; flex: none; display: flex; align-items: center; padding-bottom: 2px; box-sizing: border-box; background: linear-gradient(#a8b184, #dde0bc 12%, #ccd1a8 55%, #aeb68a); }
.start { width: 95px; height: 30px; margin-bottom: -2px; flex: none; border: 0; border-radius: 0 10px 10px 0; padding: 0 0 0 10px; display: flex; align-items: center; gap: 3px; background: linear-gradient(#b4c094, #8c9a6a 30%, #7c8c5c 75%, #9aa67c); box-shadow: inset -2px 0 2px #5f6c44; }
.start svg { width: 22px; height: 20px; }
.start span { color: #fff; font: italic 700 16.5px "Liberation Sans", sans-serif; text-shadow: 1px 1px 1px #3c4a24; }
.quick { width: 359px; flex: none; display: flex; align-items: center; gap: 7px; padding-left: 13px; box-sizing: border-box; }
.more { margin-left: 11px; font-size: 13px; font-weight: 700; margin-top: -8px; }
.tasks { display: flex; gap: 2.500px; flex: none; }
.task { width: 130px; height: 24px; box-sizing: border-box; display: flex; align-items: center; gap: 5px; padding-left: 7px; border-radius: 3px; background: linear-gradient(#e7e9cc, #d8dcb6 80%, #c2c8a0); box-shadow: inset 0 0 0 1px #b8bf98; color: #33361f; white-space: nowrap; }
.task span { margin-top: -2px; }
.task.active { background: #8e9970; color: #fff; box-shadow: inset 1px 1px 1px #5c6644; }
.lang { margin-left: 11px; background: #a0aa80; color: #f4f4e4; font-size: 11px; width: 13px; height: 14px; line-height: 12px; text-align: center; }
.tray-arrow { width: 18px; height: 18px; margin-left: 3px; border-radius: 50%; background: #b2856a; flex: none; display: flex; align-items: center; justify-content: center; z-index: 1; }
.tray-arrow svg { width: 12px; height: 12px; }
.tray { flex: 1; height: 30px; margin-bottom: -2px; display: flex; align-items: center; gap: 1.500px; margin-left: -8px; padding-left: 11px; background: #ece7c4; box-shadow: inset 1px 0 0 #c8c8a0; }
.clock { margin-left: auto; padding-right: 14px; margin-top: -2px; }

.clippy { position: absolute; left: 1050px; top: 0; width: 230px; height: 150px; pointer-events: none; }

.dialog { position: absolute; left: 536px; top: 204px; width: 414px; height: 411px; box-sizing: border-box; display: flex; flex-direction: column; border: 3px solid #a3b383; border-top-width: 2px; border-top-left-radius: 5px; border-top-right-radius: 5px; background: #ece9d8; }
.dlg-title { height: 26px; flex: none; display: flex; align-items: center; padding-left: 3px; background: linear-gradient(#a7b488, #97a678 40%, #8e9e6c 80%, #a0ad80); }
.dlg-title-text { flex: 1; color: #fff; font: 700 12px "DejaVu Sans Condensed", "Liberation Sans", sans-serif; letter-spacing: .12px; padding-top: 1px; text-shadow: 1px 1px 0 #5f6b42; white-space: nowrap; }
.dlg-q, .dlg-x { width: 20px; height: 20px; border: 1px solid #fff; border-radius: 3px; box-sizing: border-box; display: flex; align-items: center; justify-content: center; flex: none; }
.dlg-q { background: linear-gradient(135deg, #a8b48c, #7c8a5c); color: #fff; font: 700 16px "Liberation Sans", sans-serif; margin-right: 3px; }
.dlg-x { background: linear-gradient(135deg, #e8835c, #c8401c); margin-right: 1px; }
.dlg-x svg { width: 14px; height: 14px; }
.dlg-body { flex: 1; padding: 8px 7px 0 6px; display: flex; flex-direction: column; }
.dtabs { display: flex; align-items: flex-end; height: 21px; position: relative; z-index: 1; flex: none; margin-bottom: -1px; }
.dtab { width: 94px; height: 18px; line-height: 17px; text-align: center; box-sizing: border-box; background: #f4f3ec; border: 1px solid #a6a697; border-bottom: 0; border-radius: 3px 3px 0 0; white-space: nowrap; }
.dtab.active { width: 89px; height: 21px; line-height: 19px; padding-right: 3px; background: #fcfcfa; border-top: 2px solid #e68b2c; }
.panel { width: 394px; height: 314px; flex: none; box-sizing: border-box; display: flex; padding: 9px 8px 4px 5px; background: linear-gradient(#fcfcfe, #f3f2ec); border: 1px solid #a6a697; box-shadow: 1px 1px 1px #c8c6b4; }
.lbl { display: block; line-height: 15px; height: 13px; white-space: nowrap; }
.p-left { width: 159px; flex: none; display: flex; flex-direction: column; }
.p-left .lbl { margin-left: -1px; }
.list { height: 184px; margin-top: 3px; box-sizing: border-box; display: flex; background: #fff; border: 1px solid #a5b58a; flex: none; }
.items { flex: 1; }
.item { height: 18px; display: flex; align-items: center; gap: 3px; padding-left: 3px; white-space: nowrap; }
.item span { height: 17px; line-height: 14px; width: 118px; padding-left: 1px; box-sizing: border-box; }
.item.cur span { background: #96a072; color: #fff; outline: 1px dotted #444; outline-offset: -1px; }
.ls { width: 17px; flex: none; padding: 2px 1px; box-sizing: border-box; display: flex; flex-direction: column; background: #f4f3ec; }
.ls-thumb { height: 103px; margin-top: 1px; background: #a9b58c; border-radius: 2px; box-shadow: inset 0 0 0 1px #c7cfb0; }
.ls .end { margin-top: auto; }
.xbtn { height: 20px; width: 72px; padding: 0 0 1px; box-sizing: border-box; border: 1px solid #3c5a1c; border-radius: 3px; background: linear-gradient(#fff, #f4f2e6 70%, #e4e0cc); font: 10.5px "Noto Sans", "Liberation Sans", sans-serif; color: #000; white-space: nowrap; }
.preview { width: 155px; margin: auto 0 1px 1px; }
.p-right { margin-left: 12px; flex: 1; display: flex; flex-direction: column; min-width: 0; }
.p-right .lbl { margin-left: -1px; }
.thumbs { margin: 3px 0 0; display: grid; grid-template-columns: 69px 69px 69px; grid-template-rows: 62px 63px 65px; }
.thumb { box-sizing: border-box; background: #fff; border: 1px solid #a5b58a; margin: 0 -1px -1px 0; }
.thumb svg { width: 67px; height: 60px; display: block; }
.desc { margin: 11px 0 0; height: 83px; width: 209px; box-sizing: border-box; padding: 1px 0 0; background: #f2f1ea; border: 1px solid #a5b58a; line-height: 13px; }
.dlg-foot { display: flex; justify-content: flex-end; gap: 3px; margin-top: 11px; }
.xbtn.off { color: #a6a596; background: #f1f0e6; border-color: #c8c7b5; }
.dlg-foot .xbtn:first-child { margin-right: 7px; width: 71px; }
.xbtn.def { box-shadow: inset 0 0 0 2px #b5cf84; margin-right: 6px; }
</style>
